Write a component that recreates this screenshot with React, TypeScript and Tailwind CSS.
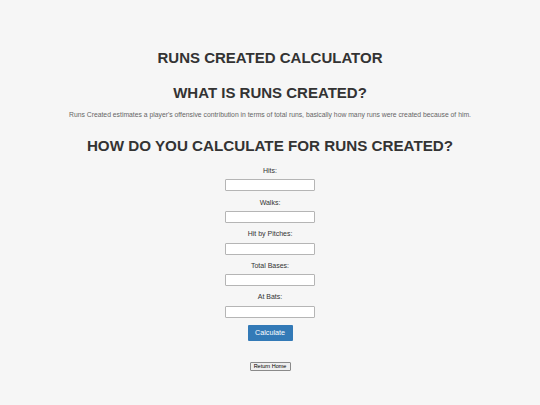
const fields = ["Hits:", "Walks:", "Hit by Pitches:", "Total Bases:", "At Bats:"];

const App = () => {
  return (
    <div className="min-h-[405px] bg-[#f6f6f6] font-['Liberation_Sans',Arial,sans-serif] text-[#333] flex flex-col items-center text-center">
      <h1 className="mt-[48px] text-[15px] leading-[20px] font-bold">RUNS CREATED CALCULATOR</h1>
      <h2 className="mt-[15px] text-[15px] leading-[20px] font-bold">WHAT IS RUNS CREATED?</h2>
      <p className="mt-[8px] text-[6.8px] leading-[8px] text-[#666]">
        Runs Created estimates a player's offensive contribution in terms of total runs, basically how many runs were created because of him.
      </p>
      <h2 className="mt-[17px] text-[15.2px] leading-[20px] font-bold">HOW DO YOU CALCULATE FOR RUNS CREATED?</h2>
      <form className="mt-[10px] flex flex-col items-center">
        {fields.map((f, i) => (
          <div key={f} className={`flex flex-col items-center ${i > 0 ? "mt-[6.2px]" : ""}`}>
            <label className="text-[7px] leading-[10px] text-[#333]">{f}</label>
            <input type="text" className="mt-[3.4px] w-[90px] h-[12px] bg-white border border-[#b5b5b5] rounded-[1px]" />
          </div>
        ))}
        <button type="button" className="mt-[7.5px] w-[45px] h-[16px] bg-[#337ab7] text-white text-[7.2px] leading-[16px] rounded-[1px]">
          Calculate
        </button>
      </form>
      <button type="button" className="mt-[21px] w-[41px] h-[9px] bg-[#efefef] border border-[#8a8a8a] rounded-[1px] text-[5.5px] leading-[7px] text-black">
        Return Home
      </button>
    </div>
  );
};

export default App;
